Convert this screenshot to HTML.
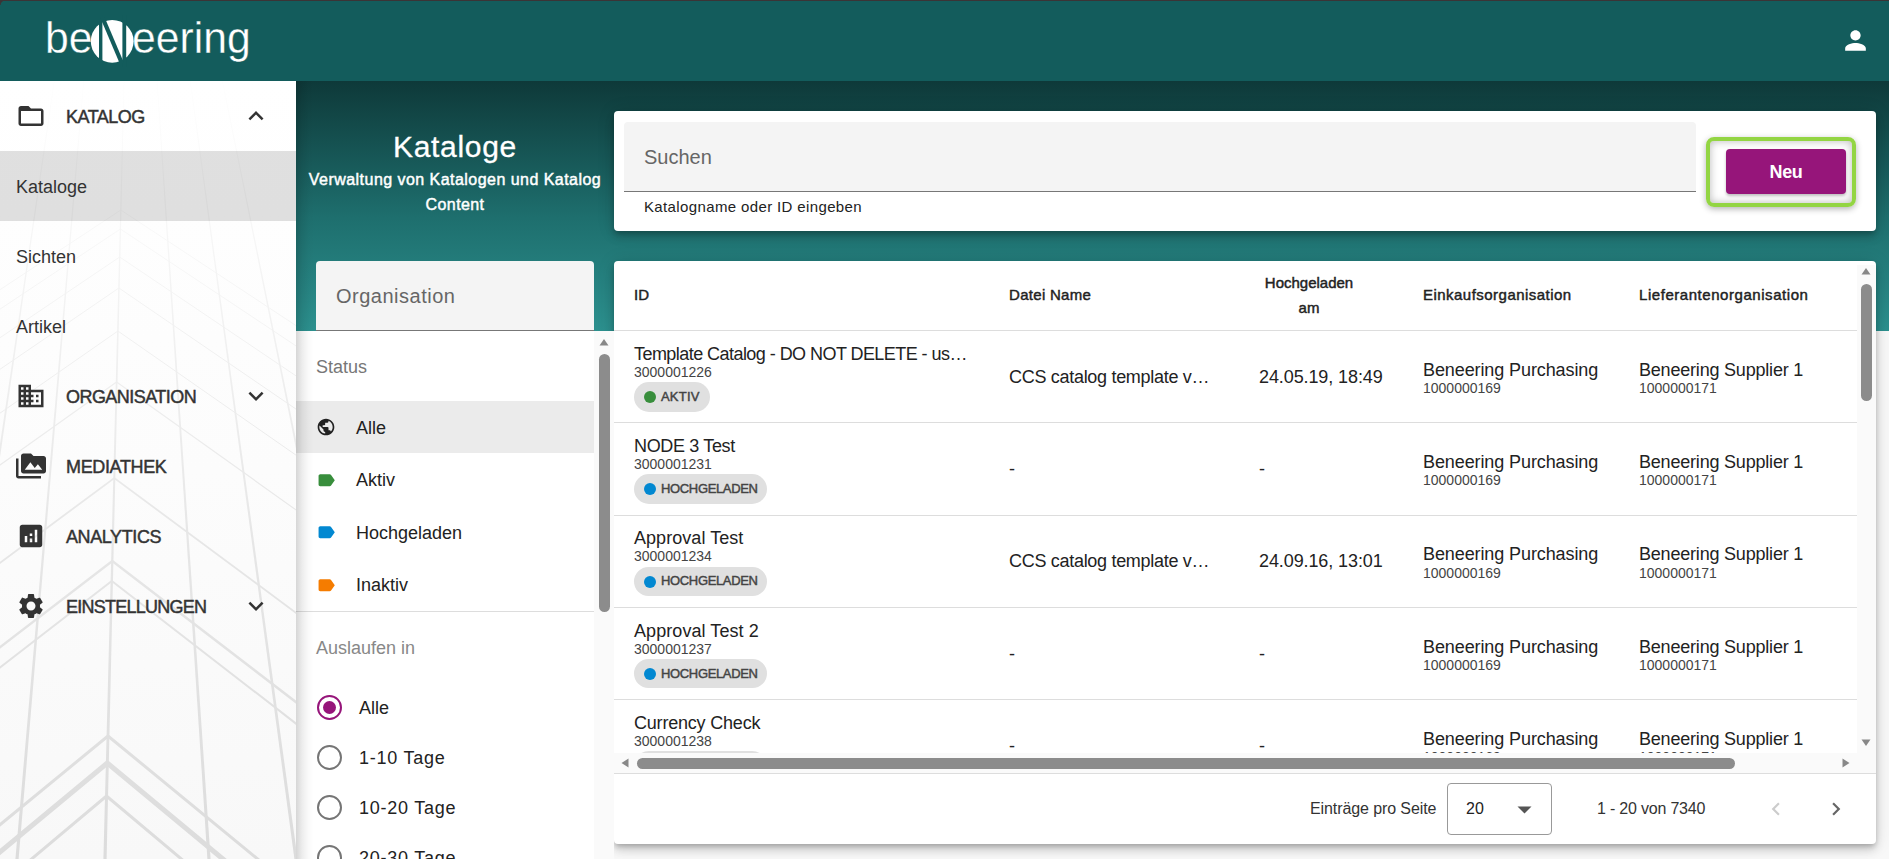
<!DOCTYPE html>
<html><head><meta charset="utf-8">
<style>
*{box-sizing:border-box;margin:0;padding:0}
html,body{width:1889px;height:859px;overflow:hidden;background:#f8f8f8;font-family:"Liberation Sans",sans-serif}
body{position:relative}
.t{position:absolute;white-space:nowrap;line-height:1}
.ic{position:absolute;display:block}
.b{position:absolute}
</style></head><body>
<div class="b" style="left:296px;top:81px;width:1593px;height:250px;background:linear-gradient(180deg,#0e3939 0%,#1e6f6e 55%,#2c908e 100%)"></div>
<div class="b" style="left:0;top:0;width:1889px;height:81px;background:#135c5c"></div>
<div class="t" style="left:44.8px;top:15.60px;font-size:44px;color:#fff;transform:scaleX(.97);transform-origin:0 0;-webkit-text-stroke:0.35px #135c5c;">be</div>
<div class="t" style="left:132px;top:15.60px;font-size:44px;color:#fff;transform:scaleX(.97);transform-origin:0 0;-webkit-text-stroke:0.35px #135c5c;">eering</div>
<svg class="ic" style="left:0;top:0;width:300px;height:81px" viewBox="0 0 300 81">
<circle cx="112.2" cy="41.3" r="21.4" fill="#fff"/>
<rect x="99" y="15" width="3.4" height="52" fill="#135c5c"/>
<rect x="122.4" y="15" width="3.8" height="52" fill="#135c5c"/>
<polygon points="100,17 104.5,17 124,63 119.5,63" fill="#135c5c"/>
</svg>
<svg class="ic" style="left:1840px;top:25px;width:31px;height:31px" viewBox="0 0 24 24"><path fill="#fff" d="M12 12c2.21 0 4-1.79 4-4s-1.79-4-4-4-4 1.79-4 4 1.79 4 4 4zm0 2c-2.67 0-8 1.34-8 4v2h16v-2c0-2.66-5.33-4-8-4z"/></svg>
<div class="b" style="left:0;top:0;width:1889px;height:1px;background:#3b3436"></div>
<div class="b" style="left:0;top:0;width:5px;height:5px;background:radial-gradient(circle at 5px 5px,rgba(59,52,54,0) 3.8px,#3b3436 4.8px)"></div>
<div class="b" style="left:0;top:81px;width:296px;height:778px;background:linear-gradient(180deg,#fff 0%,#fcfcfc 50%,#f8f8f8 100%);z-index:2;overflow:hidden"><svg style="position:absolute;left:0;top:-81px;width:296px;height:859px" viewBox="0 0 296 859"><defs><linearGradient id="lg" gradientUnits="userSpaceOnUse" x1="0" y1="81" x2="0" y2="859"><stop offset="0" stop-color="#fefefe"/><stop offset="0.3" stop-color="#f2f2f2"/><stop offset="0.6" stop-color="#e6e6e6"/><stop offset="1" stop-color="#dcdcdc"/></linearGradient></defs><g fill="none" stroke="url(#lg)" stroke-width="1.5"><polygon fill="url(#lg)" stroke="none" points="53.9,81 54.7,81 -58.4,859 -61.6,859"/><polygon fill="url(#lg)" stroke="none" points="83.3,81 84.1,81 18.6,859 15.4,859"/><polygon fill="url(#lg)" stroke="none" points="123.6,81 124.4,81 106.6,859 103.4,859"/><polygon fill="url(#lg)" stroke="none" points="156.7,81 157.5,81 210.6,859 207.4,859"/><polygon fill="url(#lg)" stroke="none" points="189.9,81 190.7,81 297.6,859 294.4,859"/><polygon fill="url(#lg)" stroke="none" points="222.0,81 222.8,81 381.6,859 378.4,859"/><polyline points="-279.2,473.9 120.8,210 520.8,473.9" stroke-width="0.8"/><polyline points="-279.6,495.3 120.4,229 520.4,495.3" stroke-width="0.8"/><polyline points="-280.3,526.7 119.7,257 519.7,526.7" stroke-width="0.9"/><polyline points="-281.1,561.5 118.9,288 518.9,561.5" stroke-width="1"/><polyline points="-282.1,609.8 117.9,331 517.9,609.8" stroke-width="1"/><polyline points="-283.4,667.1 116.6,382 516.6,667.1" stroke-width="1.2"/><polyline points="-285.7,775.0 114.3,478 514.3,775.0" stroke-width="1.8"/><polyline points="-287.7,868.2 112.3,561 512.3,868.2" stroke-width="2.5"/><polyline points="-288.2,890.7 111.8,581 511.8,890.7" stroke-width="2"/><polyline points="-292.0,1064.8 108.0,736 508.0,1064.8" stroke-width="3"/><polyline points="-292.7,1095.2 107.3,763 507.3,1095.2" stroke-width="5"/><polyline points="-293.5,1132.2 106.5,796 506.5,1132.2" stroke-width="3"/></g></svg></div>
<div style="position:absolute;left:0;top:0;z-index:4"><div class="b" style="left:0;top:151px;width:296px;height:70px;background:rgba(0,0,0,.12)"></div>
<svg class="ic" style="left:16px;top:101px;width:30px;height:30px" viewBox="0 0 24 24"><path fill="#333" d="M20 6h-8l-2-2H4c-1.1 0-1.99.9-1.99 2L2 18c0 1.1.9 2 2 2h16c1.1 0 2-.9 2-2V8c0-1.1-.9-2-2-2zm0 12H4V8h16v10z"/></svg>
<div class="t" style="left:66px;top:107.70px;font-size:18px;color:#333;-webkit-text-stroke:0.45px #333;letter-spacing:-0.5px;">KATALOG</div>
<svg class="ic" style="left:241px;top:101px;width:30px;height:30px" viewBox="0 0 24 24"><path fill="#333" d="M12 8l-6 6 1.41 1.41L12 10.83l4.59 4.58L18 14z"/></svg>
<div class="t" style="left:16px;top:177.70px;font-size:18px;color:#333;">Kataloge</div>
<div class="t" style="left:16px;top:247.70px;font-size:18px;color:#333;">Sichten</div>
<div class="t" style="left:16px;top:317.70px;font-size:18px;color:#333;">Artikel</div>
<svg class="ic" style="left:16px;top:381px;width:30px;height:30px" viewBox="0 0 24 24"><path fill="#333" d="M12 7V3H2v18h20V7H12zM6 19H4v-2h2v2zm0-4H4v-2h2v2zm0-4H4V9h2v2zm0-4H4V5h2v2zm4 12H8v-2h2v2zm0-4H8v-2h2v2zm0-4H8V9h2v2zm0-4H8V5h2v2zm10 12h-8v-2h2v-2h-2v-2h2v-2h-2V9h8v10zm-2-8h-2v2h2v-2zm0 4h-2v2h2v-2z"/></svg>
<div class="t" style="left:66px;top:387.70px;font-size:18px;color:#333;-webkit-text-stroke:0.45px #333;letter-spacing:-0.55px;">ORGANISATION</div>
<svg class="ic" style="left:241px;top:381px;width:30px;height:30px" viewBox="0 0 24 24"><path fill="#333" d="M16.59 8.59L12 13.17 7.41 8.59 6 10l6 6 6-6z"/></svg>
<svg class="ic" style="left:16px;top:451px;width:30px;height:30px" viewBox="0 0 24 24"><path fill="#333" d="M2 6H0v5h.01L0 20c0 1.1.9 2 2 2h18v-2H2V6zm20-2h-8l-2-2H6c-1.1 0-1.99.9-1.99 2L4 16c0 1.1.9 2 2 2h16c1.1 0 2-.9 2-2V6c0-1.1-.9-2-2-2zM7 15l4.5-6 3.5 4.51 2.5-3.01L21 15H7z"/></svg>
<div class="t" style="left:66px;top:457.70px;font-size:18px;color:#333;-webkit-text-stroke:0.45px #333;letter-spacing:-0.35px;">MEDIATHEK</div>
<svg class="ic" style="left:16px;top:521px;width:30px;height:30px" viewBox="0 0 24 24"><path fill="#333" d="M19 3H5c-1.1 0-2 .9-2 2v14c0 1.1.9 2 2 2h14c1.1 0 2-.9 2-2V5c0-1.1-.9-2-2-2zM9 17H7v-5h2v5zm4 0h-2v-3h2v3zm0-5h-2v-2h2v2zm4 5h-2V7h2v10z"/></svg>
<div class="t" style="left:66px;top:527.70px;font-size:18px;color:#333;-webkit-text-stroke:0.45px #333;letter-spacing:-0.4px;">ANALYTICS</div>
<svg class="ic" style="left:16px;top:591px;width:30px;height:30px" viewBox="0 0 24 24"><path fill="#333" d="M19.14 12.94c.04-.3.06-.61.06-.94 0-.32-.02-.64-.07-.94l2.03-1.58c.18-.14.23-.41.12-.61l-1.92-3.32c-.12-.22-.37-.29-.59-.22l-2.39.96c-.5-.38-1.03-.7-1.62-.94l-.36-2.54c-.04-.24-.24-.41-.48-.41h-3.84c-.24 0-.43.17-.47.41l-.36 2.54c-.59.24-1.13.57-1.62.94l-2.39-.96c-.22-.08-.47 0-.59.22L2.74 8.87c-.12.21-.08.47.12.61l2.03 1.58c-.05.3-.09.63-.09.94s.02.64.07.94l-2.03 1.58c-.18.14-.23.41-.12.61l1.92 3.32c.12.22.37.29.59.22l2.39-.96c.5.38 1.03.7 1.62.94l.36 2.54c.05.24.24.41.48.41h3.84c.24 0 .44-.17.47-.41l.36-2.54c.59-.24 1.13-.56 1.62-.94l2.39.96c.22.08.47 0 .59-.22l1.92-3.32c.12-.22.07-.47-.12-.61l-2.01-1.58zM12 15.6c-1.98 0-3.6-1.62-3.6-3.6s1.62-3.6 3.6-3.6 3.6 1.62 3.6 3.6-1.62 3.6-3.6 3.6z"/></svg>
<div class="t" style="left:66px;top:597.70px;font-size:18px;color:#333;-webkit-text-stroke:0.45px #333;letter-spacing:-0.75px;">EINSTELLUNGEN</div>
<svg class="ic" style="left:241px;top:591px;width:30px;height:30px" viewBox="0 0 24 24"><path fill="#333" d="M16.59 8.59L12 13.17 7.41 8.59 6 10l6 6 6-6z"/></svg>
</div>
<div class="t" style="left:-45px;width:1000px;text-align:center;top:131.50px;font-size:30px;color:#fff;letter-spacing:0.7px;-webkit-text-stroke:0.3px #fff;">Kataloge</div>
<div class="t" style="left:-45px;width:1000px;text-align:center;top:172.40px;font-size:16px;color:#fff;-webkit-text-stroke:0.45px #fff;letter-spacing:0.46px;">Verwaltung von Katalogen und Katalog</div>
<div class="t" style="left:-45px;width:1000px;text-align:center;top:197.40px;font-size:16px;color:#fff;-webkit-text-stroke:0.45px #fff;letter-spacing:0.4px;">Content</div>
<div class="b" style="left:614px;top:111px;width:1262px;height:120px;background:#fff;border-radius:4px;box-shadow:0 3px 5px -1px rgba(0,0,0,.2),0 6px 10px 0 rgba(0,0,0,.14),0 1px 18px 0 rgba(0,0,0,.12)"></div>
<div class="b" style="left:624px;top:122px;width:1072px;height:70px;background:#f4f4f4;border-radius:4px 4px 0 0;border-bottom:1px solid #777"></div>
<div class="t" style="left:644px;top:147.00px;font-size:20px;color:#666;">Suchen</div>
<div class="t" style="left:644px;top:199.25px;font-size:15px;color:#222;letter-spacing:0.37px;">Katalogname oder ID eingeben</div>
<div class="b" style="left:1706px;top:137px;width:150px;height:70px;border:4px solid #93d543;border-radius:8px;box-shadow:inset 0 0 9px rgba(0,0,0,.28),0 2px 6px rgba(0,0,0,.3)"></div>
<div class="b" style="left:1726px;top:149px;width:120px;height:45px;background:#96157a;border-radius:4px;box-shadow:0 2px 3px rgba(0,0,0,.25)"></div>
<div class="t" style="left:1286px;width:1000px;text-align:center;top:162.70px;font-size:18px;color:#fff;font-weight:bold;letter-spacing:-0.3px;">Neu</div>
<div class="b" style="left:316px;top:261px;width:278px;height:70px;background:#f4f4f4;border-radius:4px 4px 0 0;border-bottom:1px solid #777"></div>
<div class="t" style="left:336px;top:286.00px;font-size:20px;color:#666;letter-spacing:0.5px;">Organisation</div>
<div class="b" style="left:614px;top:261px;width:1262px;height:583px;background:#fff;border-radius:4px;box-shadow:0 3px 5px -1px rgba(0,0,0,.2),0 6px 10px 0 rgba(0,0,0,.14),0 1px 18px 0 rgba(0,0,0,.12)"></div>
<div class="t" style="left:634px;top:286.75px;font-size:15px;color:#222;-webkit-text-stroke:0.45px #222;">ID</div>
<div class="t" style="left:1009px;top:286.75px;font-size:15px;color:#222;-webkit-text-stroke:0.45px #222;letter-spacing:0.3px;">Datei Name</div>
<div class="t" style="left:809px;width:1000px;text-align:center;top:275.25px;font-size:15px;color:#222;-webkit-text-stroke:0.45px #222;">Hochgeladen</div>
<div class="t" style="left:809px;width:1000px;text-align:center;top:300.25px;font-size:15px;color:#222;-webkit-text-stroke:0.45px #222;">am</div>
<div class="t" style="left:1423px;top:286.75px;font-size:15px;color:#222;-webkit-text-stroke:0.45px #222;letter-spacing:0.47px;">Einkaufsorganisation</div>
<div class="t" style="left:1639px;top:286.75px;font-size:15px;color:#222;-webkit-text-stroke:0.45px #222;letter-spacing:0.55px;">Lieferantenorganisation</div>
<div class="b" style="left:614px;top:330px;width:1243px;height:1px;background:#ddd"></div>
<div class="b" style="left:614px;top:331px;width:1243px;height:422px;overflow:hidden"><div class="b" style="left:-614px;top:-331px;width:1889px;height:859px"><div class="t" style="left:634px;top:344.70px;font-size:18px;color:#222;letter-spacing:-0.55px;">Template Catalog - DO NOT DELETE - us…</div>
<div class="t" style="left:634px;top:364.70px;font-size:14px;color:#444;">3000001226</div>
<div class="b" style="left:634px;top:382.0px;width:76px;height:29.5px;background:#e0e0e0;border-radius:15px"></div>
<div class="b" style="left:644px;top:391.0px;width:12px;height:12px;background:#388e3c;border-radius:50%"></div>
<div class="t" style="left:661px;top:389.75px;font-size:13px;color:#444;-webkit-text-stroke:0.45px #444;letter-spacing:0.2px;">AKTIV</div>
<div class="t" style="left:1009px;top:367.70px;font-size:18px;color:#222;letter-spacing:-0.3px;">CCS catalog template v…</div>
<div class="t" style="left:1259px;top:367.70px;font-size:18px;color:#222;letter-spacing:-0.1px;">24.05.19, 18:49</div>
<div class="t" style="left:1423px;top:360.70px;font-size:18px;color:#222;letter-spacing:-0.1px;">Beneering Purchasing</div>
<div class="t" style="left:1423px;top:381.10px;font-size:14px;color:#444;">1000000169</div>
<div class="t" style="left:1639px;top:360.70px;font-size:18px;color:#222;letter-spacing:-0.2px;">Beneering Supplier 1</div>
<div class="t" style="left:1639px;top:381.10px;font-size:14px;color:#444;">1000000171</div>
<div class="b" style="left:614px;top:422.3px;width:1243px;height:1px;background:#ddd"></div>
<div class="t" style="left:634px;top:437.00px;font-size:18px;color:#222;letter-spacing:-0.35px;">NODE 3 Test</div>
<div class="t" style="left:634px;top:457.00px;font-size:14px;color:#444;">3000001231</div>
<div class="b" style="left:634px;top:474.3px;width:133px;height:29.5px;background:#e0e0e0;border-radius:15px"></div>
<div class="b" style="left:644px;top:483.3px;width:12px;height:12px;background:#0288d1;border-radius:50%"></div>
<div class="t" style="left:661px;top:482.05px;font-size:13px;color:#444;-webkit-text-stroke:0.45px #444;letter-spacing:-0.35px;">HOCHGELADEN</div>
<div class="t" style="left:1009px;top:460.00px;font-size:18px;color:#222;">-</div>
<div class="t" style="left:1259px;top:460.00px;font-size:18px;color:#222;">-</div>
<div class="t" style="left:1423px;top:453.00px;font-size:18px;color:#222;letter-spacing:-0.1px;">Beneering Purchasing</div>
<div class="t" style="left:1423px;top:473.40px;font-size:14px;color:#444;">1000000169</div>
<div class="t" style="left:1639px;top:453.00px;font-size:18px;color:#222;letter-spacing:-0.2px;">Beneering Supplier 1</div>
<div class="t" style="left:1639px;top:473.40px;font-size:14px;color:#444;">1000000171</div>
<div class="b" style="left:614px;top:514.6px;width:1243px;height:1px;background:#ddd"></div>
<div class="t" style="left:634px;top:529.30px;font-size:18px;color:#222;letter-spacing:0.05px;">Approval Test</div>
<div class="t" style="left:634px;top:549.30px;font-size:14px;color:#444;">3000001234</div>
<div class="b" style="left:634px;top:566.6px;width:133px;height:29.5px;background:#e0e0e0;border-radius:15px"></div>
<div class="b" style="left:644px;top:575.6px;width:12px;height:12px;background:#0288d1;border-radius:50%"></div>
<div class="t" style="left:661px;top:574.35px;font-size:13px;color:#444;-webkit-text-stroke:0.45px #444;letter-spacing:-0.35px;">HOCHGELADEN</div>
<div class="t" style="left:1009px;top:552.30px;font-size:18px;color:#222;letter-spacing:-0.3px;">CCS catalog template v…</div>
<div class="t" style="left:1259px;top:552.30px;font-size:18px;color:#222;letter-spacing:-0.1px;">24.09.16, 13:01</div>
<div class="t" style="left:1423px;top:545.30px;font-size:18px;color:#222;letter-spacing:-0.1px;">Beneering Purchasing</div>
<div class="t" style="left:1423px;top:565.70px;font-size:14px;color:#444;">1000000169</div>
<div class="t" style="left:1639px;top:545.30px;font-size:18px;color:#222;letter-spacing:-0.2px;">Beneering Supplier 1</div>
<div class="t" style="left:1639px;top:565.70px;font-size:14px;color:#444;">1000000171</div>
<div class="b" style="left:614px;top:606.9px;width:1243px;height:1px;background:#ddd"></div>
<div class="t" style="left:634px;top:621.60px;font-size:18px;color:#222;letter-spacing:0.07px;">Approval Test 2</div>
<div class="t" style="left:634px;top:641.60px;font-size:14px;color:#444;">3000001237</div>
<div class="b" style="left:634px;top:658.9px;width:133px;height:29.5px;background:#e0e0e0;border-radius:15px"></div>
<div class="b" style="left:644px;top:667.9px;width:12px;height:12px;background:#0288d1;border-radius:50%"></div>
<div class="t" style="left:661px;top:666.65px;font-size:13px;color:#444;-webkit-text-stroke:0.45px #444;letter-spacing:-0.35px;">HOCHGELADEN</div>
<div class="t" style="left:1009px;top:644.60px;font-size:18px;color:#222;">-</div>
<div class="t" style="left:1259px;top:644.60px;font-size:18px;color:#222;">-</div>
<div class="t" style="left:1423px;top:637.60px;font-size:18px;color:#222;letter-spacing:-0.1px;">Beneering Purchasing</div>
<div class="t" style="left:1423px;top:658.00px;font-size:14px;color:#444;">1000000169</div>
<div class="t" style="left:1639px;top:637.60px;font-size:18px;color:#222;letter-spacing:-0.2px;">Beneering Supplier 1</div>
<div class="t" style="left:1639px;top:658.00px;font-size:14px;color:#444;">1000000171</div>
<div class="b" style="left:614px;top:699.2px;width:1243px;height:1px;background:#ddd"></div>
<div class="t" style="left:634px;top:713.90px;font-size:18px;color:#222;letter-spacing:-0.2px;">Currency Check</div>
<div class="t" style="left:634px;top:733.90px;font-size:14px;color:#444;">3000001238</div>
<div class="b" style="left:634px;top:751.2px;width:133px;height:29.5px;background:#e0e0e0;border-radius:15px"></div>
<div class="b" style="left:644px;top:760.2px;width:12px;height:12px;background:#0288d1;border-radius:50%"></div>
<div class="t" style="left:661px;top:758.95px;font-size:13px;color:#444;-webkit-text-stroke:0.45px #444;letter-spacing:-0.35px;">HOCHGELADEN</div>
<div class="t" style="left:1009px;top:736.90px;font-size:18px;color:#222;">-</div>
<div class="t" style="left:1259px;top:736.90px;font-size:18px;color:#222;">-</div>
<div class="t" style="left:1423px;top:729.90px;font-size:18px;color:#222;letter-spacing:-0.1px;">Beneering Purchasing</div>
<div class="t" style="left:1423px;top:750.30px;font-size:14px;color:#444;">1000000169</div>
<div class="t" style="left:1639px;top:729.90px;font-size:18px;color:#222;letter-spacing:-0.2px;">Beneering Supplier 1</div>
<div class="t" style="left:1639px;top:750.30px;font-size:14px;color:#444;">1000000171</div>
</div></div>
<div class="b" style="left:1857px;top:265px;width:19px;height:488px;background:#fafafa"></div>
<svg class="ic" style="left:1860px;top:267px;width:12px;height:9px" viewBox="0 0 12 9"><polygon points="6,1 10.5,7.5 1.5,7.5" fill="#888"/></svg>
<div class="b" style="left:1861px;top:284px;width:11px;height:117px;background:#8c8c8c;border-radius:6px"></div>
<svg class="ic" style="left:1860px;top:738px;width:12px;height:9px" viewBox="0 0 12 9"><polygon points="6,8 10.5,1.5 1.5,1.5" fill="#888"/></svg>
<div class="b" style="left:614px;top:753px;width:1262px;height:20px;background:#fafafa"></div>
<svg class="ic" style="left:620px;top:757px;width:10px;height:12px" viewBox="0 0 10 12"><polygon points="1.5,6 8.5,1.5 8.5,10.5" fill="#888"/></svg>
<div class="b" style="left:637px;top:758px;width:1098px;height:11px;background:#8c8c8c;border-radius:6px"></div>
<svg class="ic" style="left:1841px;top:757px;width:10px;height:12px" viewBox="0 0 10 12"><polygon points="8.5,6 1.5,1.5 1.5,10.5" fill="#888"/></svg>
<div class="b" style="left:614px;top:773px;width:1262px;height:1px;background:#ddd"></div>
<div class="t" style="left:1310px;top:801.40px;font-size:16px;color:#333;letter-spacing:-0.1px;">Einträge pro Seite</div>
<div class="b" style="left:1447px;top:783px;width:105px;height:52px;border:1px solid #999;border-radius:4px"></div>
<div class="t" style="left:1466px;top:801.40px;font-size:16px;color:#222;">20</div>
<svg class="ic" style="left:1517px;top:806px;width:15px;height:8px" viewBox="0 0 15 8"><polygon points="0.5,0.5 14.5,0.5 7.5,7.5" fill="#555"/></svg>
<div class="t" style="left:1597px;top:801.40px;font-size:16px;color:#333;letter-spacing:-0.2px;">1 - 20 von 7340</div>
<svg class="ic" style="left:1763px;top:796px;width:26px;height:26px" viewBox="0 0 24 24"><path fill="#ccc" d="M15.41 7.41L14 6l-6 6 6 6 1.41-1.41L10.83 12z"/></svg>
<svg class="ic" style="left:1823px;top:796px;width:26px;height:26px" viewBox="0 0 24 24"><path fill="#666" d="M10 6L8.59 7.41 13.17 12l-4.58 4.59L10 18l6-6z"/></svg>
<div class="b" style="left:296px;top:331px;width:318px;height:528px;background:#fff"></div>
<div class="t" style="left:316px;top:357.70px;font-size:18px;color:#777;">Status</div>
<div class="b" style="left:296px;top:401px;width:298px;height:52px;background:#ebebeb"></div>
<svg class="ic" style="left:316px;top:417px;width:20px;height:20px" viewBox="0 0 24 24"><path fill="#222" d="M12 2C6.48 2 2 6.48 2 12s4.48 10 10 10 10-4.48 10-10S17.52 2 12 2zm-1 17.93c-3.95-.49-7-3.85-7-7.93 0-.62.08-1.21.21-1.79L9 15v1c0 1.1.9 2 2 2v1.93zm6.9-2.54c-.26-.81-1-1.39-1.9-1.39h-1v-3c0-.55-.45-1-1-1H8v-2h2c.55 0 1-.45 1-1V7h2c1.1 0 2-.9 2-2v-.41c2.93 1.19 5 4.06 5 7.41 0 2.08-.8 3.97-2.1 5.39z"/></svg>
<div class="t" style="left:356px;top:418.70px;font-size:18px;color:#222;">Alle</div>
<svg class="ic" style="left:315.5px;top:469.5px;width:20.5px;height:20.5px" viewBox="0 0 24 24"><path fill="#388e3c" d="M17.63 5.84C17.27 5.33 16.67 5 16 5L5 5.01C3.9 5.01 3 5.9 3 7v10c0 1.1.9 1.99 2 1.99L16 19c.67 0 1.27-.33 1.63-.84L22 12l-4.37-6.16z"/></svg>
<div class="t" style="left:356px;top:471.20px;font-size:18px;color:#222;">Aktiv</div>
<svg class="ic" style="left:315.5px;top:522px;width:20.5px;height:20.5px" viewBox="0 0 24 24"><path fill="#0288d1" d="M17.63 5.84C17.27 5.33 16.67 5 16 5L5 5.01C3.9 5.01 3 5.9 3 7v10c0 1.1.9 1.99 2 1.99L16 19c.67 0 1.27-.33 1.63-.84L22 12l-4.37-6.16z"/></svg>
<div class="t" style="left:356px;top:523.70px;font-size:18px;color:#222;">Hochgeladen</div>
<svg class="ic" style="left:315.5px;top:574.5px;width:20.5px;height:20.5px" viewBox="0 0 24 24"><path fill="#f57c00" d="M17.63 5.84C17.27 5.33 16.67 5 16 5L5 5.01C3.9 5.01 3 5.9 3 7v10c0 1.1.9 1.99 2 1.99L16 19c.67 0 1.27-.33 1.63-.84L22 12l-4.37-6.16z"/></svg>
<div class="t" style="left:356px;top:576.20px;font-size:18px;color:#222;">Inaktiv</div>
<div class="b" style="left:296px;top:611px;width:298px;height:1px;background:#ddd"></div>
<div class="t" style="left:316px;top:638.70px;font-size:18px;color:#888;">Auslaufen in</div>
<div class="b" style="left:317.0px;top:694.5px;width:25px;height:25px;border:2.5px solid #96157a;border-radius:50%"></div>
<div class="b" style="left:323.0px;top:700.5px;width:13px;height:13px;background:#96157a;border-radius:50%"></div>
<div class="t" style="left:359px;top:698.70px;font-size:18px;color:#222;">Alle</div>
<div class="b" style="left:317.0px;top:744.5px;width:25px;height:25px;border:2.5px solid #757575;border-radius:50%"></div>
<div class="t" style="left:359px;top:748.70px;font-size:18px;color:#222;letter-spacing:0.75px;">1-10 Tage</div>
<div class="b" style="left:317.0px;top:794.5px;width:25px;height:25px;border:2.5px solid #757575;border-radius:50%"></div>
<div class="t" style="left:359px;top:798.70px;font-size:18px;color:#222;letter-spacing:0.75px;">10-20 Tage</div>
<div class="b" style="left:317.0px;top:844.5px;width:25px;height:25px;border:2.5px solid #757575;border-radius:50%"></div>
<div class="t" style="left:359px;top:848.70px;font-size:18px;color:#222;letter-spacing:0.75px;">20-30 Tage</div>
<div class="b" style="left:594px;top:331px;width:20px;height:528px;background:#fafafa"></div>
<svg class="ic" style="left:598px;top:338px;width:12px;height:9px" viewBox="0 0 12 9"><polygon points="6,1 10.5,7.5 1.5,7.5" fill="#888"/></svg>
<div class="b" style="left:599px;top:354px;width:11px;height:258px;background:#8c8c8c;border-radius:6px"></div>
<div class="b" style="left:296px;top:81px;width:18px;height:778px;background:linear-gradient(90deg,rgba(0,0,0,.16),rgba(0,0,0,.07) 35%,rgba(0,0,0,.02) 70%,rgba(0,0,0,0))"></div>
</body></html>
